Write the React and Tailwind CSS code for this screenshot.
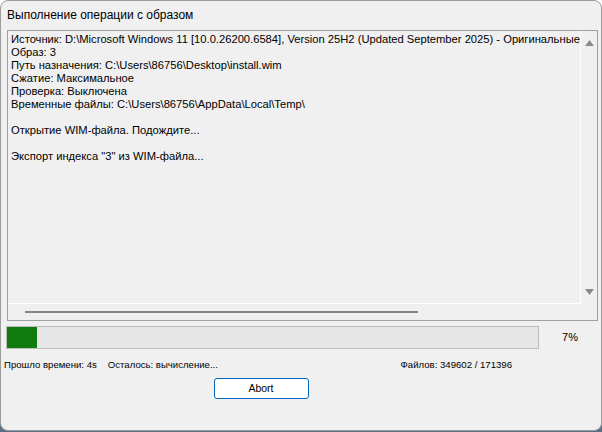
const font = { fontFamily: '"Segoe UI", "Liberation Sans", Arial, sans-serif' };

const lines = [
  "Источник: D:\\Microsoft Windows 11 [10.0.26200.6584], Version 25H2 (Updated September 2025) - Оригинальные образы",
  "Образ: 3",
  "Путь назначения: C:\\Users\\86756\\Desktop\\install.wim",
  "Сжатие: Максимальное",
  "Проверка: Выключена",
  "Временные файлы: C:\\Users\\86756\\AppData\\Local\\Temp\\",
  "",
  "Открытие WIM-файла. Подождите...",
  "",
  "Экспорт индекса \"3\" из WIM-файла...",
];

export default function App() {
  const progress = 7;

  return (
    <div className="w-[602px] h-[432px] bg-gradient-to-b from-white from-90% to-[#5a6f84] to-90%" style={font}>
      <div className="h-[431px] flex flex-col bg-[#f0f0f0] border border-[#9c9c9c] rounded-lg text-[12px] text-black overflow-hidden">
        <div className="h-[29px] flex items-center pl-[6px] pb-[1px] shrink-0">
          Выполнение операции с образом
        </div>

        <div className="ml-[6px] mr-[3px] h-[291px] border border-[#a0a0a0] grid grid-cols-[1fr_16px] grid-rows-[1fr_16px]">
          <div className="border-r border-b border-white overflow-hidden pl-[3px] pt-[2px] text-[11.2px] leading-[13px] whitespace-nowrap">
            {lines.map((l, i) => (
              <div key={i} className="h-[13px]">
                {l}
              </div>
            ))}
          </div>
          <div className="flex flex-col items-center justify-between py-[9px]">
            <svg width="9" height="6" viewBox="0 0 9 6">
              <path d="M0 6 L4.5 0 L9 6 Z" fill="#8a8a8a" />
            </svg>
            <svg width="9" height="6" viewBox="0 0 9 6">
              <path d="M0 0 L4.5 6 L9 0 Z" fill="#8a8a8a" />
            </svg>
          </div>
          <div className="flex items-center pl-[17px]">
            <div className="w-[393px] h-[2px] bg-[#858585]" />
          </div>
          <div />
        </div>

        <div className="flex items-center mt-[5px] h-[23px]">
          <div className="ml-[5px] w-[533px] h-[23px] border border-[#bcbcbc] bg-[#e6e6e6]">
            <div className="h-full bg-[#107c10]" style={{ width: `${(30 / 531) * 100}%` }} />
          </div>
          <div className="ml-[23px] text-[11px]">{progress}%</div>
        </div>

        <div className="flex items-center h-[14px] mt-[9px] pl-[3px] pr-[89px] text-[9.6px]">
          <span>Прошло времени: 4s</span>
          <span className="ml-[11px]">Осталось: вычисление...</span>
          <span className="ml-auto">Файлов: 349602 / 171396</span>
        </div>

        <div className="flex justify-center mt-[6px] pr-[80px]">
          <button className="w-[95px] h-[21px] bg-white border border-[#0067c0] rounded-[3px] text-[10.5px] leading-none">
            Abort
          </button>
        </div>
      </div>
    </div>
  );
}
